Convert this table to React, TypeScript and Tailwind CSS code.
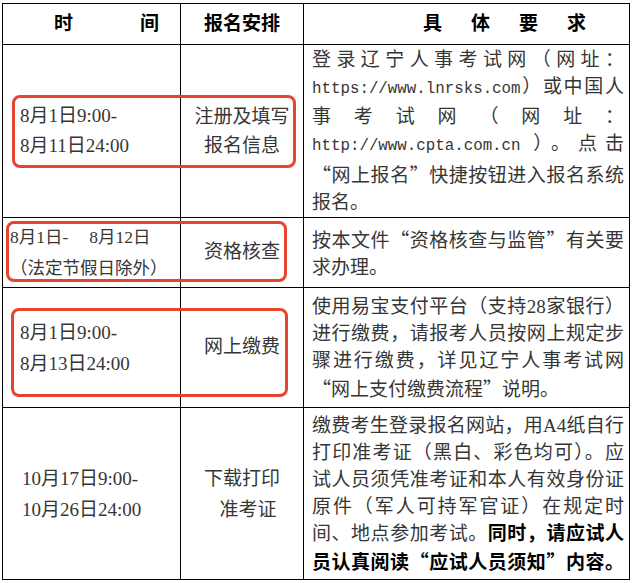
import type { ReactNode } from "react";

// full-width quotes and urls need their own font, otherwise Liberation Serif picks them up
function Q({ children }: { children: ReactNode }) {
    return <span className="font-['Noto_Sans_CJK_SC',sans-serif]">{children}</span>;
}

function Url({ children }: { children: ReactNode }) {
    return <span className="font-['Liberation_Mono',monospace] text-[15.8px]">{children}</span>;
}

// one justified line of the requirement column
function J({ children }: { children: ReactNode }) {
    return <div className="text-justify [text-align-last:justify]">{children}</div>;
}

const cell = "border-r border-b border-black flex items-center";

export default function App() {
    return (
        <div className="relative w-[634px] h-[583px] bg-white pl-[2px] pt-[3px] font-['Liberation_Serif','Noto_Sans_CJK_SC',serif] text-[19px] text-[#363636]">
            <div className="grid w-[628px] grid-cols-[178px_123px_326px] grid-rows-[41px_173px_70px_120px_172px] border-l border-t border-black">
                {/* Header */}
                <div className={`${cell} pl-[51px] gap-[67px] font-bold text-black`}>
                    <span>时</span>
                    <span>间</span>
                </div>
                <div className={`${cell} justify-center font-bold text-black`}>报名安排</div>
                <div className={`${cell} pl-[119px] gap-[29px] font-bold text-black`}>
                    <span>具</span>
                    <span>体</span>
                    <span>要</span>
                    <span>求</span>
                </div>

                {/* 注册 */}
                <div className={`${cell} pl-[17px]`}>
                    <div className="leading-[30px]">
                        <div>8月1日9:00-</div>
                        <div>8月11日24:00</div>
                    </div>
                </div>
                <div className={`${cell} justify-center text-center`}>
                    <div className="leading-[29px]">
                        <div>注册及填写</div>
                        <div>报名信息</div>
                    </div>
                </div>
                <div className={`${cell} pl-[8px] pr-[5px]`}>
                    <div className="w-full leading-[27px]">
                        <J>登录辽宁人事考试网（网址：</J>
                        <J>
                            <Url>https://www.lnrsks.com</Url>）或中国人
                        </J>
                        <J>事考试网（网址：</J>
                        <J>
                            <Url>http://www.cpta.com.cn</Url> ）。点击
                        </J>
                        <J>
                            <Q>“</Q>网上报名<Q>”</Q>快捷按钮进入报名系统
                        </J>
                        <div>报名。</div>
                    </div>
                </div>

                {/* 资格核查 */}
                <div className={`${cell} pl-[7px]`}>
                    <div className="text-[17.5px] leading-[31px] whitespace-nowrap">
                        <div>
                            8月1日-<span className="ml-[21px]">8月12日</span>
                        </div>
                        <div>（法定节假日除外）</div>
                    </div>
                </div>
                <div className={`${cell} justify-center`}>资格核查</div>
                <div className={`${cell} pl-[8px] pr-[5px]`}>
                    <div className="w-full leading-[27px]">
                        <J>
                            按本文件<Q>“</Q>资格核查与监管<Q>”</Q>有关要
                        </J>
                        <div>求办理。</div>
                    </div>
                </div>

                {/* 缴费 */}
                <div className={`${cell} pl-[17px]`}>
                    <div className="leading-[31px]">
                        <div>8月1日9:00-</div>
                        <div>8月13日24:00</div>
                    </div>
                </div>
                <div className={`${cell} justify-center`}>网上缴费</div>
                <div className={`${cell} pl-[8px] pr-[5px]`}>
                    <div className="w-full leading-[27px]">
                        <J>使用易宝支付平台（支持28家银行）</J>
                        <J>进行缴费，请报考人员按网上规定步</J>
                        <J>骤进行缴费，详见辽宁人事考试网</J>
                        <div>
                            <Q>“</Q>网上支付缴费流程<Q>”</Q>说明。
                        </div>
                    </div>
                </div>

                {/* 准考证 */}
                <div className={`${cell} pl-[19px]`}>
                    <div className="leading-[31px]">
                        <div>10月17日9:00-</div>
                        <div>10月26日24:00</div>
                    </div>
                </div>
                <div className={`${cell} justify-center text-center`}>
                    <div className="leading-[31px]">
                        <div>下载打印</div>
                        <div className="pl-[12px]">准考证</div>
                    </div>
                </div>
                <div className={`${cell} pl-[8px] pr-[5px]`}>
                    <div className="w-full leading-[27px]">
                        <J>缴费考生登录报名网站，用A4纸自行</J>
                        <J>打印准考证（黑白、彩色均可）。应</J>
                        <J>试人员须凭准考证和本人有效身份证</J>
                        <J>原件（军人可持军官证）在规定时</J>
                        <J>
                            间、地点参加考试。<b className="text-black">同时，请应试人</b>
                        </J>
                        <J>
                            <b className="text-black">
                                员认真阅读<Q>“</Q>应试人员须知<Q>”</Q>内容。
                            </b>
                        </J>
                    </div>
                </div>
            </div>

            {/* red highlight marks drawn over the table */}
            <div className="absolute left-[12px] top-[95px] w-[284px] h-[73px] rounded-[8px] border-[3px] border-[#e8432e]" />
            <div className="absolute left-[6px] top-[221px] w-[281px] h-[61px] rounded-[8px] border-[3px] border-[#e8432e]" />
            <div className="absolute left-[11px] top-[308px] w-[277px] h-[89px] rounded-[8px] border-[3px] border-[#e8432e]" />
        </div>
    );
}
